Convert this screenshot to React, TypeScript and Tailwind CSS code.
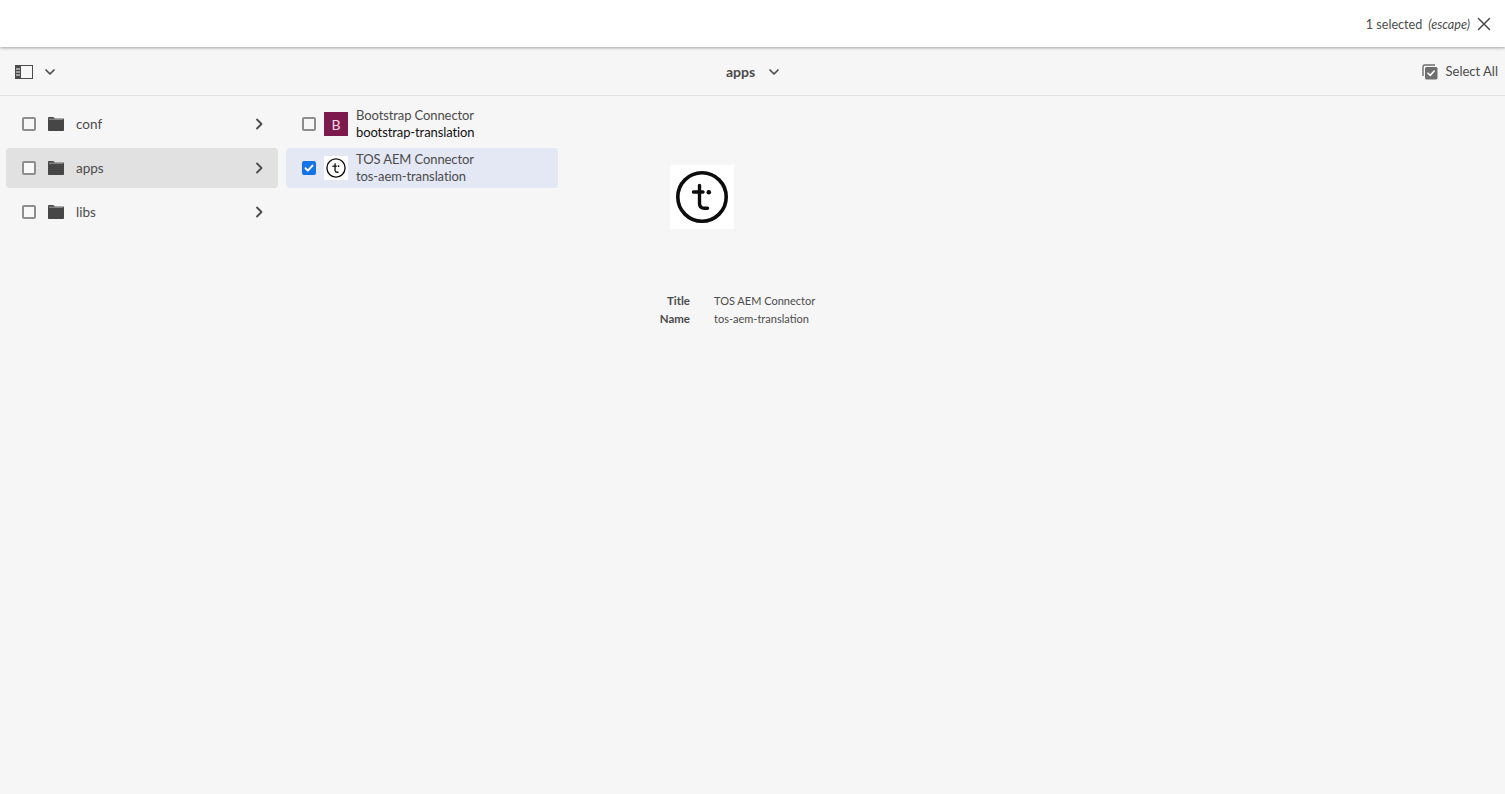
import React from "react";

const font = { fontFamily: 'Lato, sans-serif' };

const Chevron = ({ className }: { className: string }) => (
  <svg viewBox="0 0 10 10" className={className} fill="none" stroke="currentColor" strokeWidth="1.7" strokeLinecap="round" strokeLinejoin="round">
    <path d="M1 3l4 4 4-4" />
  </svg>
);

const ChevronRight = () => (
  <svg viewBox="0 0 10 12" className="h-3 w-2.5 text-[#4b4b4b]" fill="none" stroke="currentColor" strokeWidth="1.8" strokeLinecap="round" strokeLinejoin="round">
    <path d="M3 1.5L7.5 6 3 10.5" />
  </svg>
);

const Folder = () => (
  <svg viewBox="0 0 16 14" className="h-3.5 w-4 text-[#464646]" fill="currentColor">
    <path d="M0 1.2C0 .5.5 0 1.2 0h3.6c.5 0 .9.2 1.2.5L7 1.5h8c.6 0 1 .4 1 1V13c0 .6-.4 1-1 1H1c-.6 0-1-.4-1-1V1.2z" />
    <path d="M1 2.2h14" stroke="#f5f5f5" strokeWidth=".5" />
  </svg>
);

const Checkbox = ({ checked }: { checked?: boolean }) =>
  checked ? (
    <span className="flex h-3.5 w-3.5 shrink-0 items-center justify-center rounded-[2px] bg-[#1473e6]">
      <svg viewBox="0 0 12 12" className="h-3 w-3" fill="none" stroke="white" strokeWidth="2" strokeLinecap="round" strokeLinejoin="round">
        <path d="M2.5 6.2l2.4 2.4 4.6-5" />
      </svg>
    </span>
  ) : (
    <span className="h-3.5 w-3.5 shrink-0 rounded-[2px] border-2 border-[#8e8e8e] bg-[#f8f8f8]" />
  );

const TosLogo = ({ className }: { className: string }) => (
  <svg viewBox="0 0 64 64" className={className}>
    <rect width="64" height="64" fill="white" />
    <circle cx="32" cy="32" r="24.2" fill="none" stroke="#0c0c0c" strokeWidth="3.6" />
    <path d="M29.5 20.5v18c0 3.2 1.8 4.8 5 4.8h3M23.5 27h9.5" fill="none" stroke="#0c0c0c" strokeWidth="3.4" strokeLinecap="round" />
    <circle cx="38.8" cy="27.2" r="2.3" fill="#0c0c0c" />
  </svg>
);

const folders = ["conf", "apps", "libs"];

export default function App() {
  return (
    <div className="flex h-[794px] w-[1505px] flex-col overflow-hidden bg-[#f6f6f6] text-[#4b4b4b]" style={font}>
      <header className="relative z-10 flex h-[47px] shrink-0 items-center justify-end bg-white pr-3.5 shadow-[0_1px_3px_rgba(0,0,0,0.35)]">
        <span className="pt-[3px] text-[12.6px]">1 selected</span>
        <span className="ml-1.5 pt-[3px] text-[12.6px] italic">(escape)</span>
        <svg viewBox="0 0 14 14" className="ml-[7px] h-3.5 w-3.5" fill="none" stroke="#4b4b4b" strokeWidth="1.5" strokeLinecap="round">
          <path d="M1.5 1.5l11 11M12.5 1.5l-11 11" />
        </svg>
      </header>

      <div className="grid h-[49px] shrink-0 grid-cols-[1fr_auto_1fr] items-center border-b border-[#e1e1e1] px-[15px] pt-px">
        <div className="flex items-center gap-3">
          <svg viewBox="0 0 18 14" className="h-3.5 w-[18px] text-[#4b4b4b]">
            <rect x=".5" y=".5" width="17" height="13" fill="none" stroke="currentColor" />
            <rect x="0" y="0" width="6" height="14" fill="currentColor" />
            <path d="M1 4h4M1 7h4M1 10h4" stroke="#f6f6f6" />
          </svg>
          <Chevron className="h-2.5 w-2.5 text-[#4b4b4b]" />
        </div>
        <div className="flex items-center gap-3.5">
          <span className="text-[14px] font-bold">apps</span>
          <Chevron className="h-2.5 w-2.5 text-[#4b4b4b]" />
        </div>
        <div className="-mr-2 flex items-center justify-end gap-2">
          <svg viewBox="0 0 16 16" className="h-4 w-4">
            <path d="M1 12V2.5C1 1.7 1.7 1 2.5 1H13" fill="none" stroke="#6e6e6e" strokeWidth="1.4" />
            <rect x="3" y="3" width="12.5" height="12.5" rx="1.5" fill="#6e6e6e" />
            <path d="M6 9.2l2.2 2.2 4-4.4" fill="none" stroke="white" strokeWidth="1.6" strokeLinecap="round" strokeLinejoin="round" />
          </svg>
          <span className="text-[13px]">Select All</span>
        </div>
      </div>

      <div className="flex min-h-0 flex-1">
        <div className="flex w-[280px] flex-col gap-1 pl-1.5 pr-0.5 pt-2">
          {folders.map((name) => (
            <div key={name} className={`flex h-10 items-center rounded pl-4 pr-[14px] ${name === "apps" ? "bg-[#e1e1e1]" : ""}`}>
              <Checkbox />
              <span className="ml-3 flex"><Folder /></span>
              <span className="ml-3 flex-1 pt-px text-[13.5px]">{name}</span>
              <ChevronRight />
            </div>
          ))}
        </div>

        <div className="flex w-[280px] flex-col gap-1 pl-1.5 pr-0.5 pt-2">
          <div className="flex h-10 items-center rounded pl-4">
            <Checkbox />
            <span className="ml-2 flex h-6 w-6 items-center justify-center bg-[#7d1a4d] text-[14px] text-[#f3dbe6]">B</span>
            <div className="ml-2 text-[13px] leading-[17px] tracking-[-0.1px]">
              <div>Bootstrap Connector</div>
              <div className="text-[#111111]">bootstrap-translation</div>
            </div>
          </div>
          <div className="flex h-10 items-center rounded bg-[#e3e8f4] pl-4">
            <Checkbox checked />
            <TosLogo className="ml-2 h-6 w-6" />
            <div className="ml-2 text-[13px] leading-[17px] tracking-[-0.1px]">
              <div>TOS AEM Connector</div>
              <div>tos-aem-translation</div>
            </div>
          </div>
        </div>

        <div className="flex w-[284px] flex-col items-start pl-[110px] pt-[69px]">
          <TosLogo className="h-16 w-16" />
          <dl className="-ml-[110px] mt-[63px] grid grid-cols-[130px_1fr] gap-x-6 text-[11px] leading-[18px]">
            <dt className="text-right text-[11.5px] font-bold">Title</dt>
            <dd>TOS AEM Connector</dd>
            <dt className="text-right text-[11.5px] font-bold">Name</dt>
            <dd>tos-aem-translation</dd>
          </dl>
        </div>
      </div>
    </div>
  );
}
